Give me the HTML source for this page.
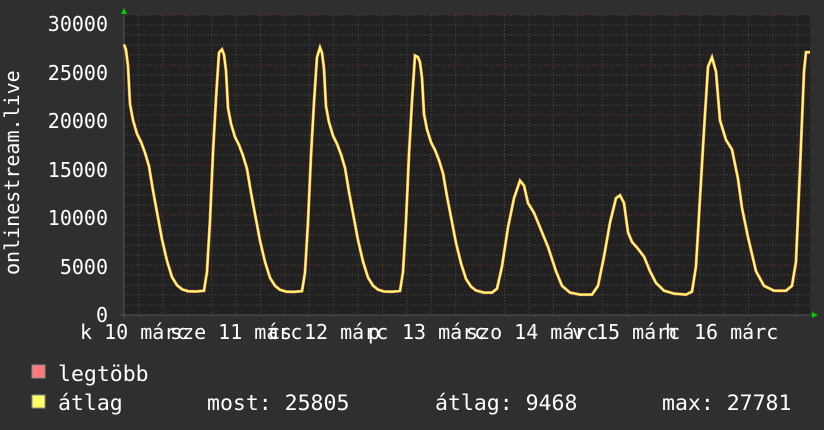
<!DOCTYPE html>
<html><head><meta charset="utf-8"><style>
body{margin:0;background:#2f2f2f;width:824px;height:430px;overflow:hidden;font-family:"DejaVu Sans Mono","Liberation Mono",monospace;color:#fff}
.t{position:absolute;font-size:20px;white-space:pre;line-height:1}
.l{font-size:21.5px}
</style></head><body>
<svg width="824" height="430" style="position:absolute;left:0;top:0" id="s">
<rect x="124" y="15" width="686" height="300" fill="#212121"/>
<g id="grid"></g>
<path id="p1" fill="none" stroke="#ff7a7a" stroke-width="3"/>
<path id="p2" fill="none" stroke="#ffff66" stroke-width="2"/>
<polygon points="121,14 127,14 124,8" fill="#0c0"/>
<polygon points="812,312 812,318 818,315" fill="#0c0"/>
<rect x="32" y="365" width="13" height="13" fill="#ff7a7a" stroke="#888"/>
<rect x="32" y="395" width="13" height="13" fill="#ffff66" stroke="#888"/>
</svg>
<div class="t" style="left:108px;top:14px;transform:translateX(-100%)">30000</div>
<div class="t" style="left:108px;top:63px;transform:translateX(-100%)">25000</div>
<div class="t" style="left:108px;top:111px;transform:translateX(-100%)">20000</div>
<div class="t" style="left:108px;top:160px;transform:translateX(-100%)">15000</div>
<div class="t" style="left:108px;top:208px;transform:translateX(-100%)">10000</div>
<div class="t" style="left:108px;top:257px;transform:translateX(-100%)">5000</div>
<div class="t" style="left:108px;top:305px;transform:translateX(-100%)">0</div>
<div class="t" style="transform:rotate(-90deg);transform-origin:0 0;left:2px;top:275px">onlinestream.live</div>
<div class="t" style="left:80px;top:322px">k 10 márc</div>
<div class="t" style="left:170px;top:322px">sze 11 márc</div>
<div class="t" style="left:268px;top:322px">cs</div>
<div class="t" style="left:304px;top:322px">12 márc</div>
<div class="t" style="left:368px;top:322px">p</div>
<div class="t" style="left:402px;top:322px">13 márc</div>
<div class="t" style="left:466px;top:322px">szo 14 márc</div>
<div class="t" style="left:572px;top:322px">v</div>
<div class="t" style="left:596px;top:322px">15 márc</div>
<div class="t" style="left:665px;top:322px">h</div>
<div class="t" style="left:694px;top:322px">16 márc</div>
<div class="t l" style="left:58px;top:364px">legtöbb</div>
<div class="t l" style="left:58px;top:393px">átlag</div>
<div class="t l" style="left:207px;top:393px">most: 25805</div>
<div class="t l" style="left:435px;top:393px">átlag: 9468</div>
<div class="t l" style="left:662px;top:393px">max: 27781</div>
<script>
var g=document.getElementById('grid'),h='';
for(var v=0;v<=30000;v+=1000){var y=315-v*0.01;var maj=v%5000==0;h+='<line x1="124" x2="810" y1="'+y+'" y2="'+y+'" stroke="'+(maj?'#6a3535':'#4a4a4a')+'" stroke-dasharray="1,2"/>';}
for(var x=138.5,i=0;x<810;x+=24.4,i++){var maj=(i%4==2);h+='<line x1="'+x+'" x2="'+x+'" y1="15" y2="315" stroke="'+(maj?'#6a3535':'#4a4a4a')+'" stroke-dasharray="1,2"/>';}
h+='<line x1="124" x2="124" y1="15" y2="318" stroke="#555"/><line x1="120" x2="812" y1="315" y2="315" stroke="#555"/>';
g.innerHTML=h;
var prof=[[0,1],[2,.98],[4,.92],[6,.78],[9,.72],[13,.67],[17,.64],[21,.6],[25,.55],[29,.46],[33,.38],[38,.28],[43,.2],[48,.14],[53,.11],[58,.095],[64,.088],[72,.087],[80,.09],[83,.16],[86,.35],[89,.6],[92,.8],[95,.97]];
var peaks=[[124,27800,98],[222,27300,98],[320,27500,98]];
var pts=[];
peaks.forEach(function(p){prof.forEach(function(q){pts.push([p[0]+q[0]*p[2]/98,p[1]*q[1]]);});});
prof.forEach(function(q){if(q[0]<=58)pts.push([418+q[0],26500*q[1]]);});
pts=pts.concat([[484,2300],[492,2300],[497,2700],[502,5000],[508,9000],[514,12000],[520,13800],[524,13300],[528,11500],[534,10500],[540,9000],[548,7000],[556,4500],[562,3000],[570,2300],[580,2100],[592,2100],[598,3000],[604,6000],[610,9500],[616,12000],[620,12300],[624,11500],[628,8500],[632,7500],[638,6800],[644,6000],[650,4500],[656,3300],[664,2500],[674,2200],[686,2100],[692,2400],[696,5000],[700,12000],[704,19000],[708,25500],[712,26500],[716,25000],[720,20000],[726,18000],[732,17000],[738,14000],[742,11000],[748,8000],[756,4500],[764,3000],[774,2500],[786,2500],[792,3000],[796,5500],[800,15000],[804,25000],[806,27000],[810,27000]]);
var d='';pts.forEach(function(p,i){d+=(i?'L':'M')+p[0].toFixed(1)+','+(315-p[1]*0.00973).toFixed(1);});
document.getElementById('p1').setAttribute('d',d);
document.getElementById('p2').setAttribute('d',d);
</script>
</body></html>
